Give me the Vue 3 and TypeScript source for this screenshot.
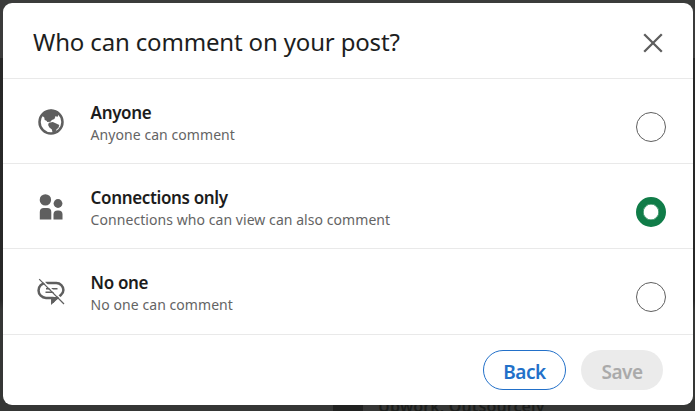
<script setup lang="ts">
import { ref } from 'vue'

interface Option {
  id: string
  title: string
  detail: string
}

const options: Option[] = [
  { id: 'anyone', title: 'Anyone', detail: 'Anyone can comment' },
  { id: 'connections', title: 'Connections only', detail: 'Connections who can view can also comment' },
  { id: 'none', title: 'No one', detail: 'No one can comment' },
]
const selected = ref('connections')
</script>

<template>
  <main class="backdrop">
    <div class="feed-photo"></div>
    <div class="feed-text">Upwork, Outsourcely</div>
    <section class="dialog" role="dialog">
      <header class="header">
        <h1 class="heading">Who can comment on your post?</h1>
        <button class="close" aria-label="Close">
          <svg width="20" height="20" viewBox="0 0 20 20">
            <path d="M1.2 1.2 18.8 18.8M18.8 1.2 1.2 18.8" fill="none" stroke="#5e5e5e" stroke-width="2.3" />
          </svg>
        </button>
      </header>
      <div v-for="o in options" :key="o.id" class="row" @click="selected = o.id">
        <svg v-if="o.id === 'anyone'" class="icon" viewBox="0 0 32 32">
          <circle cx="16" cy="16" r="11.5" fill="#fff" stroke="#5f5f5f" stroke-width="2.5" />
          <path d="M7.4 9.5 10 5.5 16 3.5l5.8 1.6 2.2 2.6-1.6 3.2-1.8-.8-1.2 3-2.5 1-1.5 1.6-3.1.2-.8-1.2-1.8-.6-.4-2.5-1-.8z" fill="#5f5f5f" />
          <path d="M13.8 16.8l4-.9 3.9 1.8 2.6 1.4-.8 2.6-1.9 1.5-1.2 2.8-2.6 2-.9-4.6-2.5-1.9-1.3-2.4z" fill="#5f5f5f" />
        </svg>
        <svg v-else-if="o.id === 'connections'" class="icon" viewBox="0 0 32 32" fill="#5f5f5f">
          <circle cx="10.4" cy="8.9" r="5.7" />
          <circle cx="23" cy="12.5" r="4.4" />
          <path d="M4.8 28.5V21a4 4 0 0 1 4-4h3.5a4 4 0 0 1 4 4v7.5z" />
          <path d="M18.5 28.5v-5a4 4 0 0 1 4-4h1a4 4 0 0 1 4 4v5z" />
        </svg>
        <svg v-else class="icon" viewBox="0 0 32 32" fill="none" stroke="#5f5f5f">
          <path d="M11 7h10.3a7.1 7.1 0 0 1 7.1 7.1q0 3-2.5 5l-6.4 5-2.2 2v-4.2H11A7.3 7.3 0 0 1 11 7z" stroke-width="2.5" />
          <path d="M17 21h6.5l-5 6H17z" fill="#5f5f5f" stroke="none" />
          <path d="M11 12.7h11.5M10.5 16.3h8.5" stroke-width="1.4" />
          <path d="M6 3 30.5 27.2" stroke="#fff" stroke-width="1.6" />
          <path d="M4.2 3.2 29 28" stroke-width="1.2" />
        </svg>
        <div class="label">
          <div class="title">{{ o.title }}</div>
          <div class="detail">{{ o.detail }}</div>
        </div>
        <span class="radio" :class="{ checked: selected === o.id }"></span>
      </div>
      <footer class="footer">
        <button class="btn back">Back</button>
        <button class="btn save" disabled>Save</button>
      </footer>
    </section>
  </main>
</template>

<style>
body {
  overflow: hidden;
}
</style>

<style scoped>
.backdrop {
  position: relative;
  box-sizing: border-box;
  width: 695px;
  height: 411px;
  padding: 3px 2px 6px 3px;
  background: linear-gradient(90deg, transparent 3px, #3b3c3b 3px, #3b3c3b 693px, transparent 693px) 0 0 / 100% 200px no-repeat, linear-gradient(#3b3b3b 58px, #282828 58px, #272727 300px, #353635 310px);
  overflow: hidden;
  font-family: "Noto Sans", "Open Sans", sans-serif;
}
.feed-text {
  position: absolute;
  left: 378px;
  top: 395px;
  color: #1b1d1b;
  font-size: 16px;
  font-weight: 600;
  line-height: 22px;
  letter-spacing: 0.12px;
  white-space: nowrap;
}
.feed-photo {
  position: absolute;
  left: 333px;
  top: 405px;
  width: 30px;
  height: 6px;
  background: #202120;
}
.dialog {
  position: relative;
  box-sizing: border-box;
  width: 690px;
  height: 402px;
  background: #fff;
  border-radius: 9px;
}
.header {
  display: flex;
  align-items: center;
  justify-content: space-between;
  box-sizing: border-box;
  height: 76px;
  padding: 4px 30px 0;
  border-bottom: 1px solid #e9e9e9;
}
.heading {
  margin: 0 0 2px;
  color: #1d1e1e;
  font-size: 24px;
  font-weight: 400;
  line-height: 32px;
  letter-spacing: -0.16px;
  white-space: nowrap;
}
.close {
  display: flex;
  padding: 0;
  border: 0;
  background: none;
}
.row {
  display: flex;
  box-sizing: border-box;
  height: 85px;
  padding: 0 27px 0 32px;
  border-bottom: 1px solid #e9e9e9;
}
.row:nth-last-child(2) {
  height: 86px;
}
.icon {
  width: 32px;
  height: 32px;
  margin-top: 27px;
}
.label {
  flex: 1;
  padding: 22px 0 0 24px;
  white-space: nowrap;
}
.title {
  color: #1c1c1c;
  font-size: 17px;
  font-weight: 600;
  line-height: 24px;
  letter-spacing: -0.36px;
}
.title,
.detail {
  margin-left: -0.4px;
}
.detail {
  color: #646464;
  font-size: 14px;
  line-height: 20px;
  letter-spacing: 0.06px;
}
.label .title {
  height: 24px;
  line-height: 23px;
}
.radio {
  box-sizing: border-box;
  width: 30px;
  height: 30px;
  margin-top: 33px;
  border: 1px solid #5f5f5f;
  border-radius: 50%;
}
.radio.checked {
  border: 7px solid #107c48;
  box-shadow: inset 0 0 0 0.6px #107c48;
}
.footer {
  display: flex;
  justify-content: flex-end;
  gap: 15px;
  padding: 15px 30px 0;
}
.btn {
  box-sizing: border-box;
  height: 40px;
  padding: 4px 0 0;
  border: 0;
  border-radius: 20px;
  font-family: inherit;
  font-size: 19px;
  font-weight: 600;
  line-height: 26px;
  letter-spacing: -0.5px;
}
.back {
  width: 83px;
  border: 1px solid #2270c9;
  background: #fff;
  color: #2270c9;
}
.save {
  width: 82px;
  background: #ebebeb;
  color: #aaa;
}
</style>
